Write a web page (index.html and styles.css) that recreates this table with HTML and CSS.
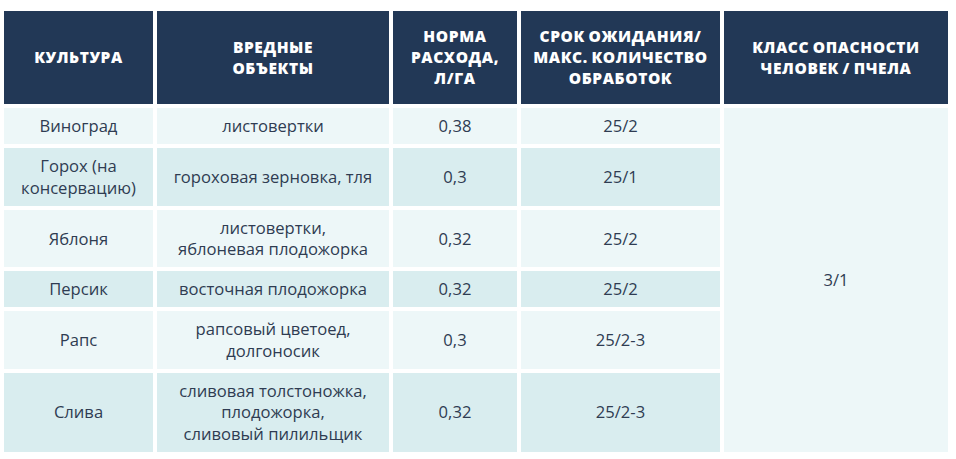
FILE: index.html
```html
<!DOCTYPE html>
<html lang="ru">
<head>
<meta charset="utf-8">
<link rel="stylesheet" href="styles.css">
</head>
<body>
<table class="reg-table">
  <colgroup>
    <col class="c1"><col class="c2"><col class="c3"><col class="c4"><col class="c5">
  </colgroup>
  <thead>
    <tr>
      <th>Культура</th>
      <th>Вредные<br>объекты</th>
      <th>Норма<br>расхода,<br>л/га</th>
      <th>Срок ожидания/<br>макс. количество<br>обработок</th>
      <th>Класс опасности<br>человек / пчела</th>
    </tr>
  </thead>
  <tbody>
    <tr class="odd">
      <td>Виноград</td>
      <td>листовертки</td>
      <td>0,38</td>
      <td>25/2</td>
      <td class="span" rowspan="6">3/1</td>
    </tr>
    <tr class="even">
      <td>Горох (на<br>консервацию)</td>
      <td>гороховая зерновка, тля</td>
      <td>0,3</td>
      <td>25/1</td>
    </tr>
    <tr class="odd">
      <td>Яблоня</td>
      <td>листовертки,<br>яблоневая плодожорка</td>
      <td>0,32</td>
      <td>25/2</td>
    </tr>
    <tr class="even">
      <td>Персик</td>
      <td>восточная плодожорка</td>
      <td>0,32</td>
      <td>25/2</td>
    </tr>
    <tr class="odd">
      <td>Рапс</td>
      <td>рапсовый цветоед,<br>долгоносик</td>
      <td>0,3</td>
      <td>25/2-3</td>
    </tr>
    <tr class="even">
      <td>Слива</td>
      <td>сливовая толстоножка,<br>плодожорка,<br>сливовый пилильщик</td>
      <td>0,32</td>
      <td>25/2-3</td>
    </tr>
  </tbody>
</table>
</body>
</html>
```

FILE: styles.css
```css
html, body {
  margin: 0;
  padding: 0;
  background: #ffffff;
}
body {
  padding-top: 7px;
  font-family: "Open Sans", "Noto Sans", sans-serif;
}
.reg-table {
  width: 952px;
  border-collapse: separate;
  border-spacing: 4px;
  table-layout: fixed;
}
.c1 { width: 149px; }
.c2 { width: 232px; }
.c3 { width: 124px; }
.c4 { width: 199px; }
.c5 { width: 224px; }
.reg-table th {
  background: #223856;
  color: #ffffff;
  font-weight: 800;
  font-size: 15.5px;
  letter-spacing: 0.6px;
  line-height: 21px;
  text-transform: uppercase;
  word-spacing: -1px;
  height: 93px;
  box-sizing: border-box;
  padding: 0 1px;
  text-align: center;
  vertical-align: middle;
}
.reg-table td {
  color: #2f3c52;
  font-size: 16.6px;
  line-height: 21.5px;
  padding: 7.25px 4px;
  text-align: center;
  vertical-align: middle;
}
.odd td { background: #edf7f8; }
.even td { background: #d9edef; }
.reg-table td.span { background: #edf7f8; }
```
